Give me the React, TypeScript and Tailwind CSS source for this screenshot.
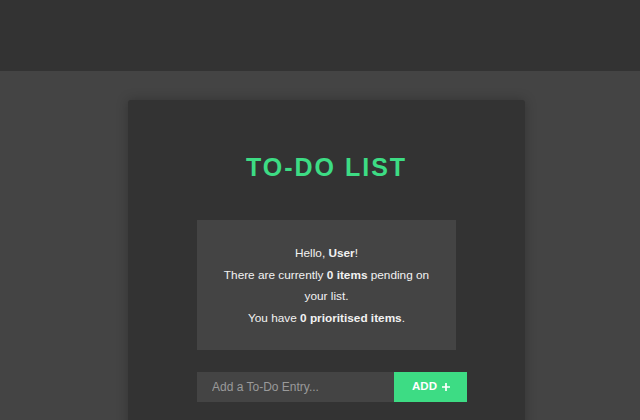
import React from "react";

export default function App() {
  return (
    <div className="w-[640px] h-[420px] overflow-hidden bg-[#444444] font-['Liberation_Sans',Arial,sans-serif]">
      <div className="h-[71px] bg-[#333333]" />
      <div className="pt-[29px] pl-[128px]">
        <div className="w-[397px] h-[400px] bg-[#333333] rounded-[3px] shadow-[0_0_12px_rgba(0,0,0,0.25)] flex flex-col items-center pt-[52px]">
          <h1 className="text-[25px] leading-[30px] font-bold tracking-[2px] text-[#3ddc84]">TO-DO LIST</h1>
          <div className="mt-[38px] w-[259px] flex flex-col items-start">
            <div className="w-[259px] h-[130px] bg-[#444444] px-[18px] pt-[23px] text-center text-[11.8px] leading-[21px] text-[#f2f2f2]">
              <p>Hello, <b>User</b>!</p>
              <p className="mt-[1px]">There are currently <b>0 items</b> pending on your list.</p>
              <p className="mt-[1px]">You have <b>0 prioritised items</b>.</p>
            </div>
            <div className="mt-[22px] flex w-[270px] h-[30px]">
              <input
                className="w-[197px] h-[30px] bg-[#444444] px-[15px] text-[12px] text-[#ddd] placeholder:text-[#9a9a9a] outline-none"
                placeholder="Add a To-Do Entry..."
              />
              <button className="w-[73px] h-[30px] bg-[#3ddc84] text-white text-[11.5px] font-bold flex items-center justify-center gap-[5px] pl-[1px]">
                ADD
                <svg width="8" height="8" viewBox="0 0 8 8"><path d="M4 0V8M0 4H8" stroke="white" strokeWidth="1.7" /></svg>
              </button>
            </div>
          </div>
        </div>
      </div>
    </div>
  );
}
